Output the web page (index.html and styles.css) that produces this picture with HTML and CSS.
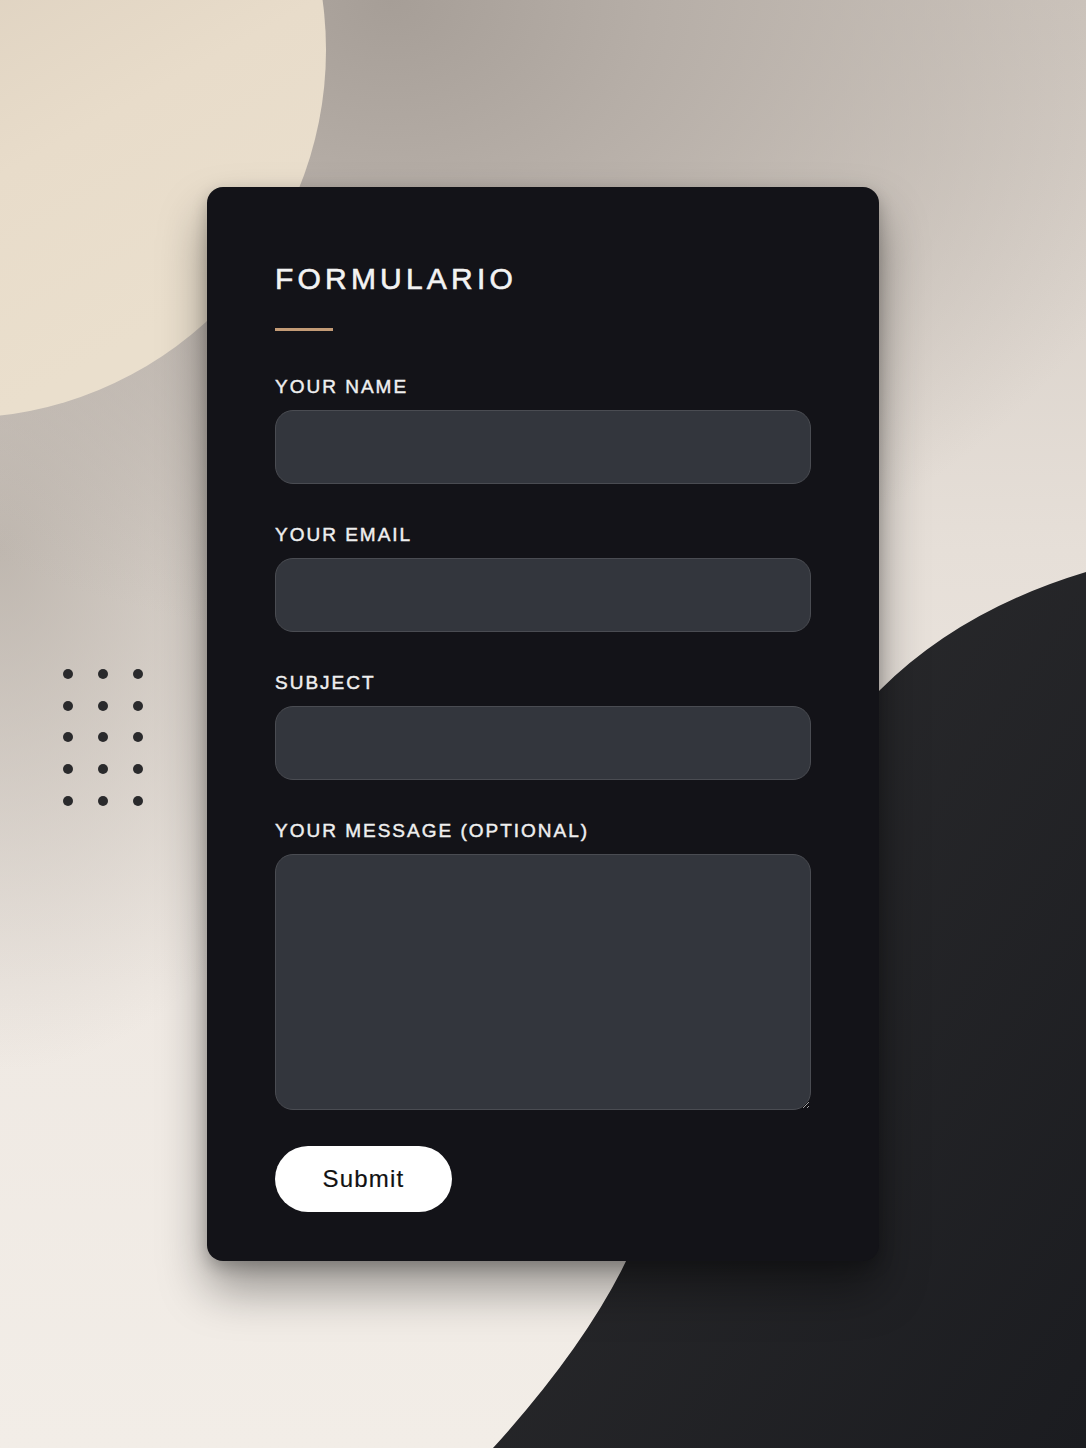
FILE: index.html
```html
<!DOCTYPE html>
<html lang="es">
<head>
<meta charset="utf-8">
<title>Formulario</title>
<link rel="stylesheet" href="styles.css">
</head>
<body>
<div class="page">
  <svg class="bg-art" viewBox="0 0 1086 1448" width="1086" height="1448" aria-hidden="true">
    <defs>
      <linearGradient id="cream" x1="0" y1="0" x2="0.55" y2="1">
        <stop offset="0" stop-color="#cabdad"/>
        <stop offset="0.75" stop-color="#e8dcca"/>
        <stop offset="1" stop-color="#eadfcd"/>
      </linearGradient>
      <linearGradient id="dark" x1="0" y1="0" x2="1" y2="1">
        <stop offset="0" stop-color="#2e2e30"/>
        <stop offset="1" stop-color="#1b1c20"/>
      </linearGradient>
    </defs>
    <circle cx="-42" cy="50" r="368" fill="url(#cream)"/>
    <path d="M1086 572 Q 960 610 880 690 Q 700 880 640 1230 Q 600 1330 493 1448 L 1086 1448 Z" fill="url(#dark)"/>
    <g fill="#2a2a2c">
      <circle cx="68" cy="674" r="5"/><circle cx="103" cy="674" r="5"/><circle cx="138" cy="674" r="5"/>
      <circle cx="68" cy="706" r="5"/><circle cx="103" cy="706" r="5"/><circle cx="138" cy="706" r="5"/>
      <circle cx="68" cy="737" r="5"/><circle cx="103" cy="737" r="5"/><circle cx="138" cy="737" r="5"/>
      <circle cx="68" cy="769" r="5"/><circle cx="103" cy="769" r="5"/><circle cx="138" cy="769" r="5"/>
      <circle cx="68" cy="801" r="5"/><circle cx="103" cy="801" r="5"/><circle cx="138" cy="801" r="5"/>
    </g>
  </svg>

  <form class="card">
    <h1 class="title">FORMULARIO</h1>
    <div class="accent"></div>

    <div class="fields">
      <div class="field">
        <label class="label" for="name">YOUR NAME</label>
        <input class="input" id="name" type="text">
      </div>
      <div class="field">
        <label class="label" for="email">YOUR EMAIL</label>
        <input class="input" id="email" type="email">
      </div>
      <div class="field">
        <label class="label" for="subject">SUBJECT</label>
        <input class="input" id="subject" type="text">
      </div>
      <div class="field">
        <label class="label" for="message">YOUR MESSAGE (OPTIONAL)</label>
        <textarea class="input textarea" id="message"></textarea>
      </div>
    </div>

    <button class="submit" type="button">Submit</button>
  </form>
</div>
</body>
</html>
```

FILE: styles.css
```css
* {
  box-sizing: border-box;
}

html, body {
  margin: 0;
  padding: 0;
}

body {
  font-family: "Liberation Sans", Arial, sans-serif;
}

.page {
  position: relative;
  width: 1086px;
  height: 1448px;
  overflow: hidden;
  background:
    radial-gradient(ellipse 820px 640px at 36% 0%, #a69e97 0%, #b6aea7 32%, rgba(220, 212, 204, 0) 100%),
    radial-gradient(ellipse 360px 520px at 0% 38%, rgba(178, 170, 162, 0.75) 0%, rgba(190, 182, 174, 0) 100%),
    linear-gradient(180deg, #d0c8c0 0%, #e6dfd8 38%, #efe9e3 68%, #f2ede7 100%);
  padding-top: 187px;
}

.bg-art {
  position: absolute;
  left: 0;
  top: 0;
  display: block;
}

.card {
  position: relative;
  z-index: 1;
  width: 672px;
  margin: 0 auto;
  background: #131318;
  border-radius: 16px;
  padding: 74px 68px 49px;
  box-shadow:
    0 28px 48px rgba(0, 0, 0, 0.38),
    0 6px 16px rgba(0, 0, 0, 0.22);
  display: flex;
  flex-direction: column;
  align-items: flex-start;
}

.title {
  margin: 0;
  font-size: 30px;
  line-height: 36px;
  font-weight: 400;
  letter-spacing: 4.2px;
  color: #f3f3f3;
  -webkit-text-stroke: 0.6px #f3f3f3;
}

.accent {
  width: 58px;
  height: 3px;
  background: #c39b76;
  margin-top: 31px;
}

.fields {
  align-self: stretch;
  margin-top: 45px;
  display: flex;
  flex-direction: column;
  gap: 40px;
}

.field {
  display: flex;
  flex-direction: column;
  gap: 12px;
}

.label {
  font-size: 19px;
  line-height: 22px;
  letter-spacing: 2px;
  color: #efefef;
  -webkit-text-stroke: 0.45px #efefef;
}

.input {
  display: block;
  width: 100%;
  height: 74px;
  margin: 0;
  border: 1px solid #4a4c52;
  border-radius: 18px;
  background: #33363d;
  color: #eee;
  font-family: "Liberation Sans", Arial, sans-serif;
  font-size: 18px;
  padding: 0 20px;
  outline: none;
}

.textarea {
  height: 256px;
  padding: 18px 20px;
  resize: vertical;
}

.submit {
  margin-top: 36px;
  width: 177px;
  height: 66px;
  border: none;
  border-radius: 33px;
  background: #ffffff;
  color: #111;
  font-family: "Liberation Sans", Arial, sans-serif;
  font-size: 24px;
  letter-spacing: 1.2px;
  -webkit-text-stroke: 0.2px #111;
  cursor: pointer;
  padding: 0;
}
```
